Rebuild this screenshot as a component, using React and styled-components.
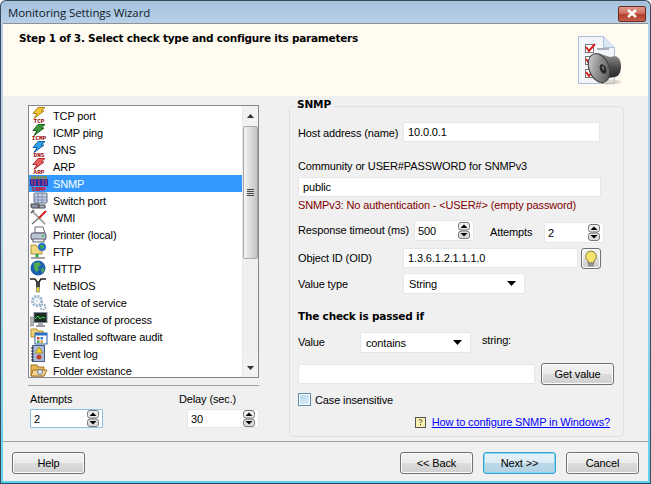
import React from "react";
import styled, { createGlobalStyle } from "styled-components";

const Global = createGlobalStyle`
  html, body { margin: 0; padding: 0; background: #fff; }
  * { box-sizing: border-box; }
  body { font-family: "Liberation Sans", Arial, sans-serif; font-size: 11px; letter-spacing: -0.13px; color: #000; }
`;

const Frame = styled.div`
  width: 651px; height: 484px; overflow: hidden;
  display: flex; flex-direction: column;
  border: 1px solid #3a4a58; border-bottom-color: #1d4e6a;
  border-radius: 6px 6px 0 0;
  background: linear-gradient(#a5c2de 0, #b9d1e8 24px, #b9d1ea 200px, #5fd0ee 100%);
`;
const TitleBar = styled.div`
  height: 22px; flex: none; display: flex; align-items: center; justify-content: space-between;
  padding: 0 4px 0 7px;
`;
const Title = styled.span`
  font-family: "Open Sans", sans-serif; font-size: 11.5px; color: #10202c; letter-spacing: -0.1px;
`;
const CloseButton = styled.div`
  width: 28px; height: 16px; margin-top: 3px; display: flex; align-items: center; justify-content: center;
  border: 1px solid #6c2a22; border-radius: 2px;
  background: linear-gradient(#dd9a8c 0, #d0705f 45%, #b33c2a 55%, #c4604c 100%);
`;
const Client = styled.div`
  flex: 1; margin: 0 2px 2px 2px; display: flex; flex-direction: column;
  background: #f0f0f0; border-top: 1px solid #8f9094; min-height: 0;
`;
const Header = styled.div`
  height: 72px; flex: none; background: #fffbf0; display: flex; justify-content: space-between;
  padding: 7px 26px 0 16px;
`;
const HeaderText = styled.div`
  font-family: "DejaVu Sans", sans-serif; font-weight: 700; font-size: 10.5px; line-height: 14px; letter-spacing: -0.24px;
`;
const HeaderIconWrap = styled.div`
  margin-top: 5px; width: 44px; height: 50px;
`;
const Main = styled.div`
  height: 346px; flex: none; display: flex; align-items: flex-start;
  border-bottom: 1px solid #a0a0a0; padding-left: 25px;
`;
const LeftCol = styled.div`
  width: 231px; flex: none; padding-top: 9px; display: flex; flex-direction: column;
`;
const ListBox = styled.div`
  height: 273px; border: 1px solid #828790; background: #fff; display: flex; overflow: hidden;
`;
const ListItems = styled.div`
  flex: 1; min-width: 0; overflow: hidden; padding-top: 1px;
`;
const Row = styled.div`
  height: 17px; display: flex; align-items: center; padding-left: 1px; gap: 5px; white-space: nowrap;
  background: ${p => (p.$selected ? "#3399ff" : "transparent")};
  color: ${p => (p.$selected ? "#fff" : "#000")};
`;
const ScrollBar = styled.div`
  width: 16px; flex: none; display: flex; flex-direction: column; background: #f0f0f0; border-left: 1px solid #e8e8e8;
`;
const ScrollBtn = styled.div`
  height: 19px; flex: none; display: flex; align-items: center; justify-content: center; background: #f2f2f2;
`;
const ScrollTrack = styled.div`
  flex: 1; display: flex; flex-direction: column; padding-top: 1px; background: #f0f0f0;
`;
const Thumb = styled.div`
  height: 133px; border: 1px solid #a8a8a8; border-radius: 2px;
  background: linear-gradient(90deg, #f4f4f4, #dcdcdc 50%, #c4c4c4);
  display: flex; align-items: center; justify-content: center;
`;
const Grip = styled.div`
  width: 7px; height: 7px;
  background: repeating-linear-gradient(#444 0, #444 1px, #ddd 1px, #ddd 2px);
`;
const Rule = styled.div`
  height: 1px; background: #a0a0a0; margin-top: 7px;
`;
const LeftFields = styled.div`
  display: flex; justify-content: space-between; padding-left: 2px; margin-top: 6px;
`;
const LeftField = styled.div`
  width: ${p => p.$w}px; display: flex; flex-direction: column; gap: 3px;
`;
const Label = styled.span`
  line-height: 14px; white-space: nowrap; flex: none;
  width: ${p => (p.$w ? p.$w + "px" : "auto")};
  margin-left: ${p => p.$ml || 0}px; margin-top: ${p => p.$mt || 0}px;
`;
const Input = styled.div`
  height: ${p => p.$h || 20}px; width: ${p => p.$w ? p.$w + "px" : "auto"}; flex: ${p => p.$w ? "none" : 1};
  background: #fff; border: 1px solid ${p => (p.$focus ? "#8cbfe4" : "#e4e6ea")}; border-radius: 1px;
  margin-left: ${p => p.$ml || 0}px; margin-top: ${p => p.$mt || 0}px;
  display: flex; align-items: center; justify-content: space-between; padding: 0 3px 0 ${p => p.$pl || 4}px;
  white-space: nowrap;
`;
const Group = styled.div`
  position: relative; width: 335px; height: 331px; margin: 10px 0 0 30px; flex: none;
  border: 1px solid #dce0e4; border-radius: 4px; padding: 15px 0 0 8px;
`;
const Legend = styled.div`
  position: absolute; left: 4px; top: -9px; padding: 0 3px; background: #f0f0f0;
  font-family: "DejaVu Sans", sans-serif; font-weight: 700; font-size: 10.5px; line-height: 13px;
`;
const FormRow = styled.div`
  display: flex; align-items: ${p => p.$top ? "flex-start" : "center"}; margin-top: ${p => p.$mt || 0}px;
`;
const Red = styled.div`
  color: #800000; line-height: 14px; margin-top: 1px;
`;
const Bold = styled.div`
  font-family: "DejaVu Sans", sans-serif; font-weight: 700; font-size: 10.5px; line-height: 14px; letter-spacing: -0.2px; margin-top: 15px;
`;
const Button = styled.div`
  width: ${p => p.$w || 73}px; height: 22px; flex: none; display: flex; align-items: center; justify-content: center;
  border: 1px solid ${p => (p.$default ? "#3c9fd0" : "#707070")}; border-radius: 3px;
  box-shadow: inset 0 0 0 1px ${p => (p.$default ? "#7fd8f4" : "#fbfbfb")};
  background: ${p => p.$default
    ? "linear-gradient(#e8f3f9 0, #dcecf5 50%, #bdd9e8 50%, #b3d2e4 100%)"
    : "linear-gradient(#f2f2f2 0, #ebebeb 50%, #dcdcdc 50%, #cfcfcf 100%)"};
  margin-left: ${p => p.$ml || 0}px;
`;
const BulbBtn = styled(Button)`
  width: 20px; height: 21px; margin-left: 3px;
`;
const Check = styled.div`
  width: 13px; height: 13px; flex: none; border: 1px solid #5d8aa8; box-shadow: inset 0 0 0 1px #fff;
  background: linear-gradient(135deg, #b4d6ee, #e0f0fa);
`;
const LinkRow = styled.div`
  display: flex; align-items: center; justify-content: flex-end; margin-top: 8px; padding-right: 13px; gap: 6px;
`;
const HelpLink = styled.a`
  color: #0000ff; text-decoration: underline; line-height: 14px;
`;
const Footer = styled.div`
  flex: 1; display: flex; align-items: flex-start; justify-content: space-between; padding: 10px 9px 0 9px;
`;
const FooterRight = styled.div`
  display: flex; gap: 10px;
`;

const Spin = () => (
  <svg width="12" height="17" viewBox="0 0 12 17">
    <rect x="0.5" y="0.5" width="11" height="7.5" rx="2.5" fill="#eee" stroke="#777" />
    <rect x="0.5" y="9" width="11" height="7.5" rx="2.5" fill="#ddd" stroke="#777" />
    <path d="M6 2.500 9.500 6h-7z" fill="#000" />
    <path d="M2.500 11h7L6 14.500z" fill="#000" />
  </svg>
);
const Caret = () => (
  <svg width="9" height="5" viewBox="0 0 9 5" style={{ marginRight: 5 }}>
    <path d="M0 0h9L4.500 5z" fill="#000" />
  </svg>
);

const iconStyle = { flex: "none", overflow: "visible" };

const Bolt = ({ fill, stroke, label, fs = 6 }) => (
  <svg width="18" height="17" viewBox="0 0 18 17" style={iconStyle}>
    <path d="M8 0.500h7L11 4h3L4 11.500 7 6.500H3z" fill={fill} stroke={stroke} strokeWidth="1" />
    <text x="9" y="15.800" textAnchor="middle" fontFamily="Liberation Mono, monospace" fontWeight="700" fontSize={fs} letterSpacing="0" fill="#9a0000">{label}</text>
  </svg>
);
const SnmpIcon = () => (
  <svg width="18" height="17" viewBox="0 0 18 17" style={iconStyle}>
    <rect x="1" y="1" width="16" height="3" fill="#6f8f6a" />
    <rect x="0" y="4" width="18" height="7" fill="#2430a0" />
    <path d="M2 4v6M5 4v7M9 4v7M13 4v7M16 4v6" stroke="#e04060" strokeWidth="1" />
    <text x="9" y="15.800" textAnchor="middle" fontFamily="Liberation Mono, monospace" fontWeight="700" fontSize="6" letterSpacing="0" fill="#e00000">SNMP</text>
  </svg>
);
const SwitchIcon = () => (
  <svg width="18" height="17" viewBox="0 0 18 17" style={iconStyle}>
    <rect x="4" y="1" width="13" height="10" rx="1" fill="#c4d2e8" stroke="#5a6a8a" />
    <path d="M4 5h13M4 8h13M8 1v10M12 1v10" stroke="#7a8aa8" />
    <path d="M1 12h8v4H2a2 2 0 0 1-1-2z" fill="#8a94a4" stroke="#444" />
    <path d="M9 13h6v3H9z" fill="#a8b2c0" stroke="#444" />
  </svg>
);
const WmiIcon = () => (
  <svg width="18" height="17" viewBox="0 0 18 17" style={iconStyle}>
    <path d="M2 2l13 13" stroke="#a8a8a8" strokeWidth="2" />
    <path d="M1 4l3-3" stroke="#555" strokeWidth="1.500" />
    <path d="M2 15L10 8" stroke="#777" strokeWidth="1.500" />
    <path d="M9 9l7-7" stroke="#d02020" strokeWidth="2" />
  </svg>
);
const PrinterIcon = () => (
  <svg width="18" height="17" viewBox="0 0 18 17" style={iconStyle}>
    <path d="M5 1h8l2 6H5z" fill="#fff" stroke="#667" />
    <rect x="1" y="7" width="15" height="7" rx="2" fill="#b8c4d0" stroke="#556" />
    <rect x="3" y="13" width="11" height="3" fill="#e8eef4" stroke="#667" />
    <rect x="12" y="9" width="2" height="1.500" fill="#20c040" />
  </svg>
);
const FtpIcon = () => (
  <svg width="18" height="17" viewBox="0 0 18 17" style={iconStyle}>
    <path d="M1 2h5l1 2h5v7H1z" fill="#f0d880" stroke="#a89040" />
    <circle cx="12" cy="4" r="4" fill="#2a70c8" />
    <path d="M10 2l3 0 1 3-3 1z" fill="#40b040" />
    <path d="M7 11v3" stroke="#20a040" strokeWidth="3" />
    <path d="M1 15h14" stroke="#808080" strokeWidth="1.500" />
  </svg>
);
const GlobeIcon = () => (
  <svg width="18" height="17" viewBox="0 0 18 17" style={iconStyle}>
    <circle cx="8" cy="8" r="7.500" fill="#1f5fb0" />
    <path d="M4 3l5-1 2 3-3 2 1 3-3 2-2-4zM11 9l3-1 0 3-2 2z" fill="#4cae4c" />
  </svg>
);
const NetbiosIcon = () => (
  <svg width="18" height="17" viewBox="0 0 18 17" style={iconStyle}>
    <path d="M0 2h5l2 3h2l2-3h5" fill="none" stroke="#222" strokeWidth="1.500" />
    <path d="M6 5h4v5H6z" fill="#444" />
    <rect x="6.500" y="10" width="3" height="5" fill="#e8d040" stroke="#555" strokeWidth=".5" />
  </svg>
);
const GearIcon = () => (
  <svg width="18" height="17" viewBox="0 0 18 17" style={iconStyle}>
    <circle cx="7" cy="7" r="4.500" fill="none" stroke="#9ab4cc" strokeWidth="3" strokeDasharray="2 1" />
    <circle cx="7" cy="7" r="2" fill="#dfe8f0" />
    <circle cx="13" cy="13" r="2.500" fill="none" stroke="#8aa4bc" strokeWidth="2" strokeDasharray="1.500 1" />
  </svg>
);
const ProcessIcon = () => (
  <svg width="18" height="17" viewBox="0 0 18 17" style={iconStyle}>
    <rect x="0.500" y="6" width="3" height="9" fill="#b0b4b8" stroke="#777" strokeWidth=".5" />
    <rect x="4" y="1.500" width="13" height="10" fill="#1c2c24" stroke="#889" />
    <path d="M5 8l3-3 2 3 2-2 3 1" fill="none" stroke="#30e040" />
    <path d="M8 12h5v2H8z" fill="#aab" />
    <path d="M6 15h9" stroke="#778" strokeWidth="1.500" />
  </svg>
);
const SoftwareIcon = () => (
  <svg width="18" height="17" viewBox="0 0 18 17" style={iconStyle}>
    <path d="M1 1h6l1 2h5v6H1z" fill="#f0d070" stroke="#b09030" />
    <rect x="5" y="5" width="12" height="11" fill="#fff" stroke="#2a60a8" />
    <rect x="5" y="5" width="12" height="2.500" fill="#2a70c8" />
    <rect x="7" y="9" width="2.500" height="2.500" fill="#d04030" />
    <rect x="10.500" y="9" width="2.500" height="2.500" fill="#3080d0" />
    <rect x="7" y="12.500" width="2.500" height="2.500" fill="#40a040" />
    <rect x="10.500" y="12.500" width="2.500" height="2.500" fill="#e0a020" />
  </svg>
);
const LogIcon = () => (
  <svg width="18" height="17" viewBox="0 0 18 17" style={iconStyle}>
    <rect x="2.500" y="0.500" width="12" height="16" fill="#a8bcd8" stroke="#4a5a80" />
    <path d="M1 3h3M1 6h3M1 9h3M1 12h3M1 15h3" stroke="#223" />
    <path d="M9 2l4 6H5z" fill="#f0d020" stroke="#806000" strokeWidth=".5" />
    <circle cx="9" cy="12" r="2.500" fill="#c04030" />
  </svg>
);
const FolderIcon = () => (
  <svg width="18" height="17" viewBox="0 0 18 17" style={iconStyle}>
    <path d="M1 3h6l1 2h6v9H1z" fill="#e8b850" stroke="#a07020" />
    <path d="M3 8h14l-3 6H1z" fill="#f4d890" stroke="#a07020" />
    <circle cx="10" cy="10" r="2.500" fill="#dfe8f4" stroke="#6a7a90" />
  </svg>
);

const items = [
  ["TCP port", <Bolt fill="#f0c830" stroke="#b08010" label="TCP" />],
  ["ICMP ping", <Bolt fill="#3c9a3c" stroke="#1c601c" label="ICMP" />],
  ["DNS", <Bolt fill="#30a0e8" stroke="#1060a0" label="DNS" />],
  ["ARP", <Bolt fill="#e86060" stroke="#b03030" label="ARP" />],
  ["SNMP", <SnmpIcon />],
  ["Switch port", <SwitchIcon />],
  ["WMI", <WmiIcon />],
  ["Printer (local)", <PrinterIcon />],
  ["FTP", <FtpIcon />],
  ["HTTP", <GlobeIcon />],
  ["NetBIOS", <NetbiosIcon />],
  ["State of service", <GearIcon />],
  ["Existance of process", <ProcessIcon />],
  ["Installed software audit", <SoftwareIcon />],
  ["Event log", <LogIcon />],
  ["Folder existance", <FolderIcon />],
];

const HeaderIcon = () => (
  <svg width="44" height="50" viewBox="0 0 44 50">
    <defs>
      <linearGradient id="horn" x1="0" y1="0" x2="1" y2="1">
        <stop offset="0" stopColor="#e0e0e0" />
        <stop offset="0.5" stopColor="#8c8c8c" />
        <stop offset="1" stopColor="#4a4a4a" />
      </linearGradient>
      <linearGradient id="body" x1="0" y1="0" x2="0" y2="1">
        <stop offset="0" stopColor="#9a9a9a" />
        <stop offset="0.5" stopColor="#444" />
        <stop offset="1" stopColor="#1c1c1c" />
      </linearGradient>
    </defs>
    <path d="M.5.500h25l11 11v36H.5z" fill="#f2f6fb" stroke="#a9c0d8" />
    <path d="M25.500.500v11h11" fill="#dce7f1" stroke="#a9c0d8" />
    <g fill="#fff" stroke="#777">
      <rect x="7.500" y="8.500" width="8" height="8" />
      <rect x="7.500" y="20.500" width="8" height="8" />
      <rect x="7.500" y="33.500" width="8" height="8" />
    </g>
    <g fill="none" stroke="#d82020" strokeWidth="2">
      <path d="M8 11l3 4 6-7" />
      <path d="M8 23l3 4 6-7" />
      <path d="M8 36l3 4 6-7" />
    </g>
    <path d="M19 13h12" stroke="#667" />
    <ellipse cx="31" cy="46" rx="12" ry="2.500" fill="#c8c0b0" opacity=".6" />
    <path d="M20 17L32 21 37 20C41 21 43 25 43 30 43 36 41 40 37 41L30 42 24 48z" fill="url(#body)" />
    <ellipse cx="21" cy="32" rx="10" ry="15" transform="rotate(-22 21 32)" fill="url(#horn)" stroke="#444" />
    <ellipse cx="25" cy="33" rx="3" ry="5" transform="rotate(-22 25 33)" fill="#2a2a2a" />
    <ellipse cx="25" cy="32" rx="1" ry="2" transform="rotate(-22 25 32)" fill="#777" />
  </svg>
);

const Bulb = () => (
  <svg width="16" height="17" viewBox="0 0 16 17">
    <path d="M8 1a5.500 5.500 0 0 0-3 10v2h6v-2A5.500 5.500 0 0 0 8 1z" fill="#f6e36a" stroke="#8a8040" />
    <rect x="5.500" y="13" width="5" height="3" fill="#999" stroke="#666" strokeWidth=".5" />
  </svg>
);
const HelpIcon = () => (
  <svg width="11" height="11" viewBox="0 0 11 11" style={iconStyle}>
    <rect x=".5" y=".5" width="10" height="10" fill="#f8f0b0" stroke="#555" />
    <path d="M4 3.500c0-1 3-1 3 .3 0 1-1.500 1-1.500 2.200M5.500 7v1.200" fill="none" stroke="#444" />
  </svg>
);

export default function App() {
  return (
    <Frame>
      <Global />
      <TitleBar>
        <Title>Monitoring Settings Wizard</Title>
        <CloseButton>
          <svg width="12" height="9" viewBox="0 0 12 9">
            <path d="M2 1l8 7M10 1L2 8" stroke="#fff" strokeWidth="2.400" />
          </svg>
        </CloseButton>
      </TitleBar>
      <Client>
        <Header>
          <HeaderText>Step 1 of 3. Select check type and configure its parameters</HeaderText>
          <HeaderIconWrap><HeaderIcon /></HeaderIconWrap>
        </Header>
        <Main>
          <LeftCol>
            <ListBox>
              <ListItems>
                {items.map(([t, ic]) => (
                  <Row key={t} $selected={t === "SNMP"}>{ic}<span>{t}</span></Row>
                ))}
              </ListItems>
              <ScrollBar>
                <ScrollBtn>
                  <svg width="7" height="4" viewBox="0 0 7 4"><path d="M3.500 0L7 4H0z" fill="#333" /></svg>
                </ScrollBtn>
                <ScrollTrack>
                  <Thumb><Grip /></Thumb>
                </ScrollTrack>
                <ScrollBtn>
                  <svg width="7" height="4" viewBox="0 0 7 4"><path d="M0 0h7L3.500 4z" fill="#333" /></svg>
                </ScrollBtn>
              </ScrollBar>
            </ListBox>
            <Rule />
            <LeftFields>
              <LeftField $w={73}>
                <Label>Attempts</Label>
                <Input $h={22} $focus $pl={3}>2<Spin /></Input>
              </LeftField>
              <LeftField $w={72}>
                <Label $ml={-8}>Delay (sec.)</Label>
                <Input $h={22} $pl={3}>30<Spin /></Input>
              </LeftField>
            </LeftFields>
          </LeftCol>
          <Group>
            <Legend>SNMP</Legend>
            <FormRow>
              <Label $w={105} $mt={2}>Host address (name)</Label>
              <Input $w={197}>10.0.0.1</Input>
            </FormRow>
            <Label as="div" $mt={17}>Community or USER#PASSWORD for SNMPv3</Label>
            <FormRow $mt={4}>
              <Input $w={303}>public</Input>
            </FormRow>
            <Red>SNMPv3: No authentication - &lt;USER#&gt; (empty password)</Red>
            <FormRow $top $mt={8}>
              <Label $w={116} $mt={3}>Response timeout (ms)</Label>
              <Input $w={60} $h={21} $pl={3}>500<Spin /></Input>
              <Label $w={54} $ml={16} $mt={5}>Attempts</Label>
              <Input $w={60} $h={21} $mt={2} $pl={3}>2<Spin /></Input>
            </FormRow>
            <FormRow $top $mt={5}>
              <Label $w={105} $mt={3}>Object ID (OID)</Label>
              <Input $w={175}>1.3.6.1.2.1.1.1.0</Input>
              <BulbBtn><Bulb /></BulbBtn>
            </FormRow>
            <FormRow $mt={4}>
              <Label $w={105}>Value type</Label>
              <Input $w={122} $h={21} $pl={5}>String<Caret /></Input>
            </FormRow>
            <Bold>The check is passed if</Bold>
            <FormRow $top $mt={9}>
              <Label $w={62} $mt={3}>Value</Label>
              <Input $w={111} $h={21} $pl={5}>contains<Caret /></Input>
              <Label $ml={11} $mt={1}>string:</Label>
            </FormRow>
            <FormRow $mt={10}>
              <Input $w={237}></Input>
              <Button $ml={6}>Get value</Button>
            </FormRow>
            <FormRow $top $mt={8}>
              <Check />
              <Label $ml={4}>Case insensitive</Label>
            </FormRow>
            <LinkRow>
              <HelpIcon />
              <HelpLink href="#">How to configure SNMP in Windows?</HelpLink>
            </LinkRow>
          </Group>
        </Main>
        <Footer>
          <Button>Help</Button>
          <FooterRight>
            <Button>&lt;&lt; Back</Button>
            <Button $default>Next &gt;&gt;</Button>
            <Button>Cancel</Button>
          </FooterRight>
        </Footer>
      </Client>
    </Frame>
  );
}
